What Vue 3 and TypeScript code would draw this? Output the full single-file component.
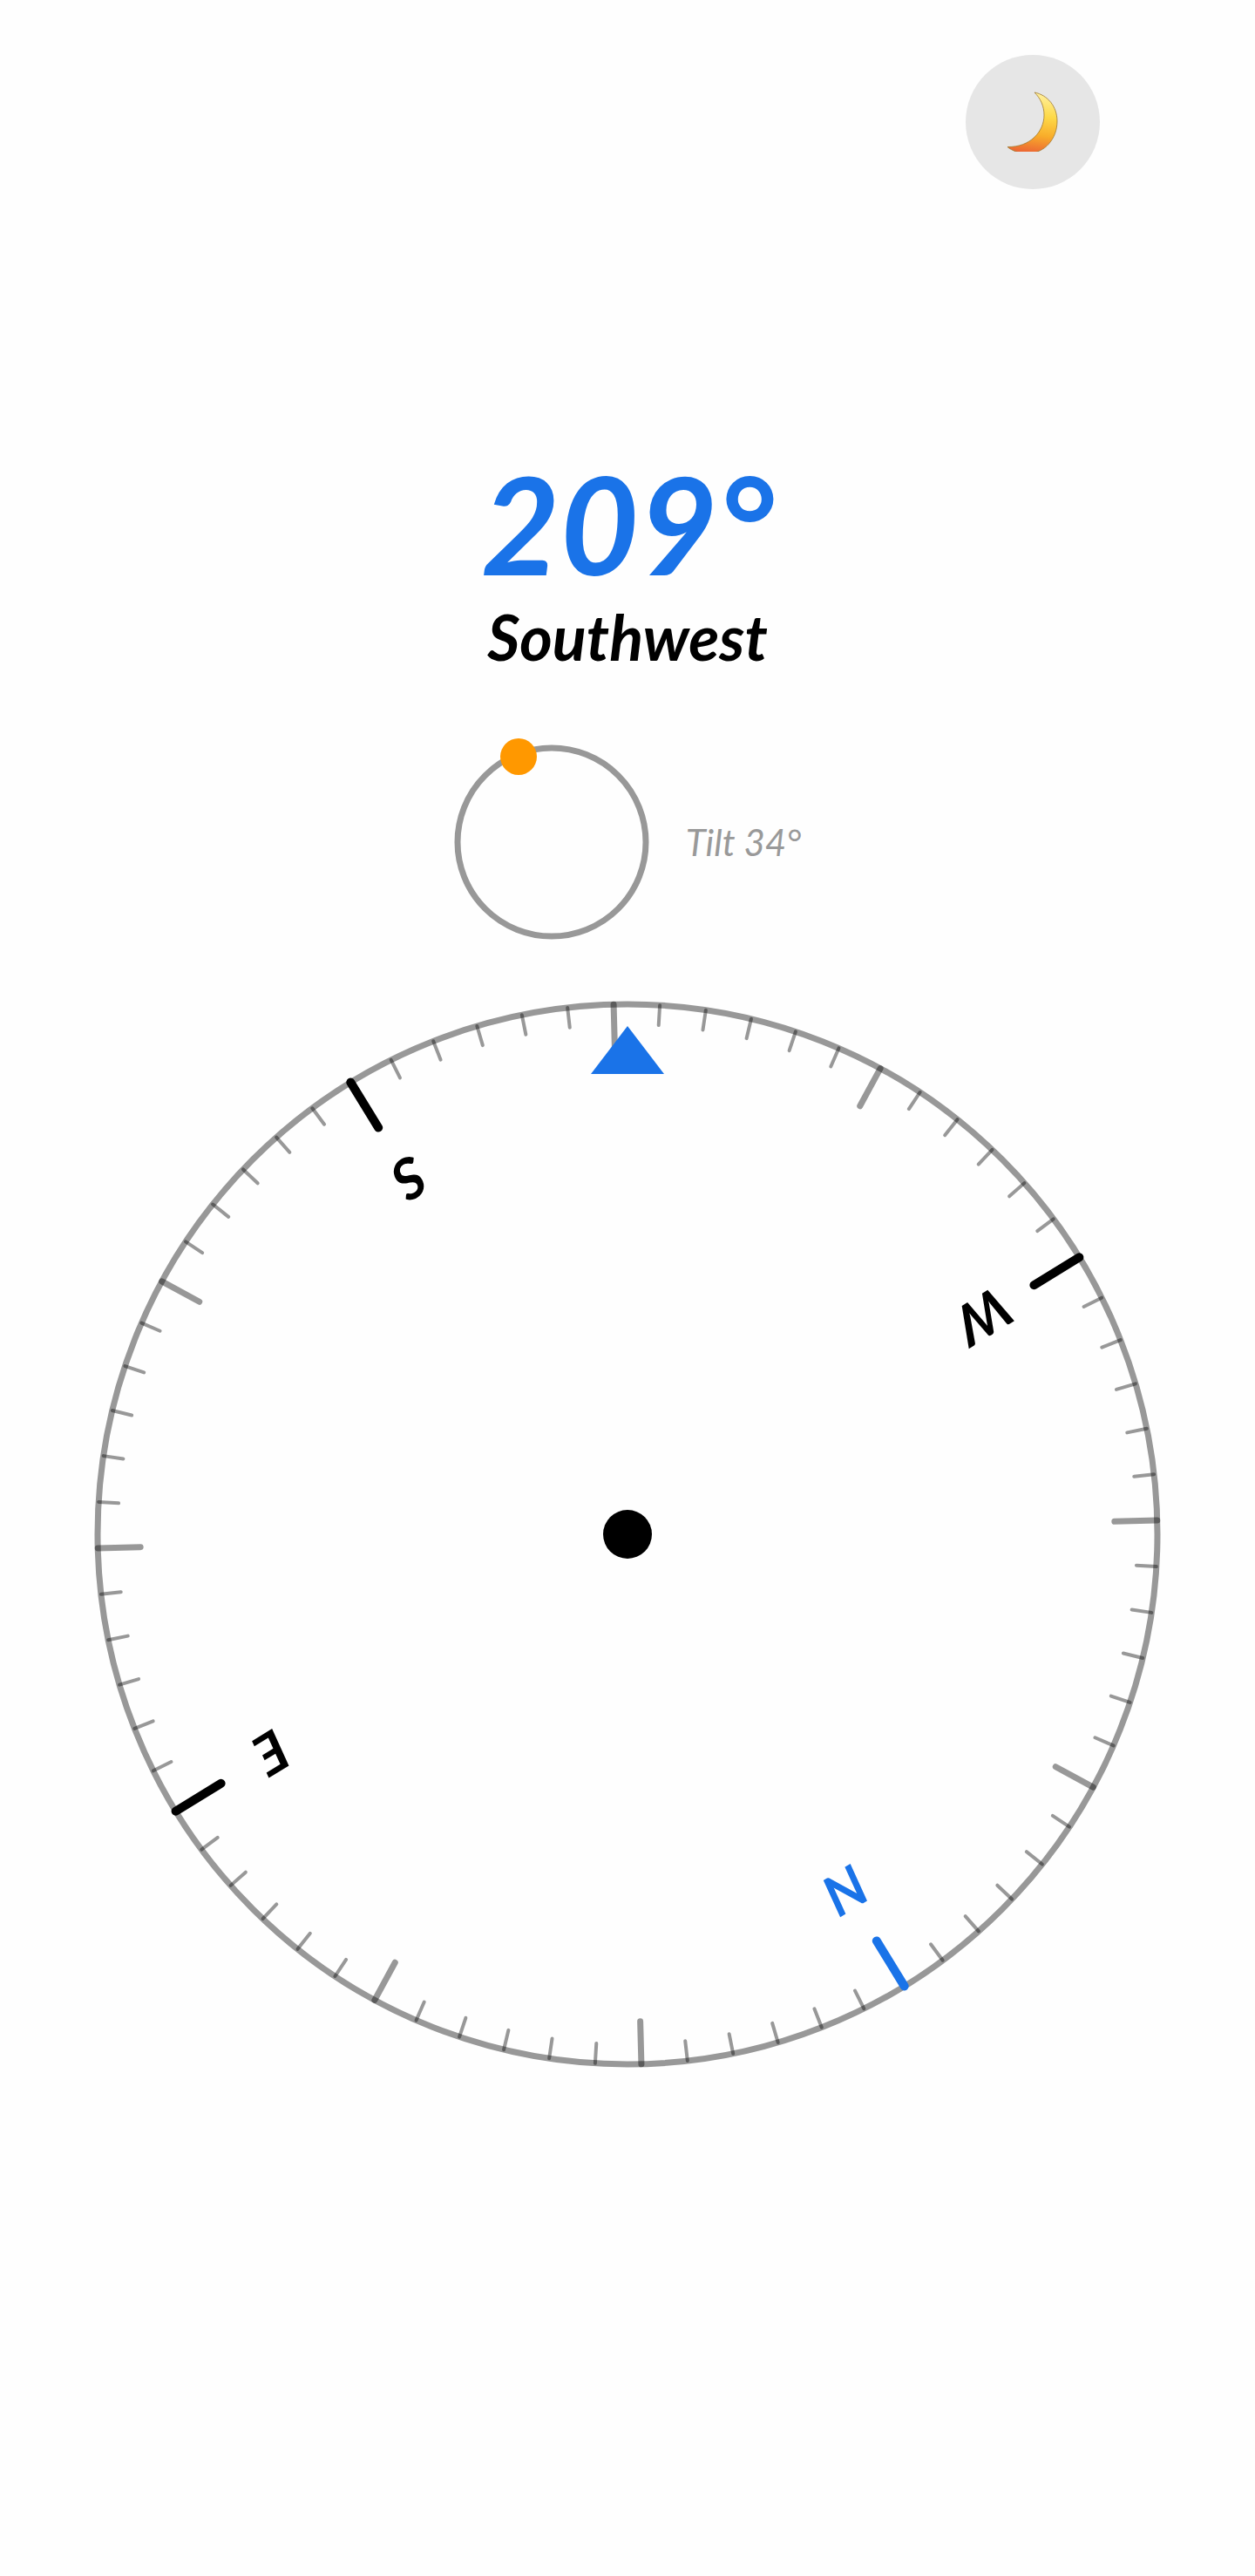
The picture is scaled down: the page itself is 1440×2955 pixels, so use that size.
<script setup lang="ts">
import { computed, ref } from 'vue'

interface Tick {
  angle: number
  kind: 'minor' | 'major' | 'cardinal' | 'north'
  inner: number
}

interface Cardinal {
  label: string
  angle: number
}

const heading = ref(209)
const direction = ref('Southwest')
const tilt = ref(34)
const dialRotation = ref(148.5)

const RADIUS = 608
const LETTER_RADIUS = 479

const cardinals: Cardinal[] = [
  { label: 'N', angle: 0 },
  { label: 'E', angle: 90 },
  { label: 'S', angle: 180 },
  { label: 'W', angle: 270 },
]

const ticks = computed<Tick[]>(() =>
  Array.from({ length: 72 }, (_, i) => {
    const angle = i * 5
    if (angle === 0) return { angle, kind: 'north', inner: 547 }
    if (angle % 90 === 0) return { angle, kind: 'cardinal', inner: 547 }
    if (angle % 30 === 0) return { angle, kind: 'major', inner: 559 }
    return { angle, kind: 'minor', inner: 585 }
  }),
)

// Letters keep the dial's own orientation wherever they sit on it.
function letterTransform(angle: number): string {
  return `rotate(${angle}) translate(0 ${-LETTER_RADIUS}) rotate(${-angle})`
}
</script>

<template>
  <main class="compass">
    <header class="toolbar">
      <button class="theme" type="button" aria-label="Switch to dark theme">
        <svg class="moon" viewBox="0 0 60 70" aria-hidden="true">
          <defs>
            <linearGradient id="moon-fill" x1="0.6" y1="0" x2="0.5" y2="1">
              <stop offset="0" stop-color="#fff0a0" />
              <stop offset="0.38" stop-color="#fdd948" />
              <stop offset="0.7" stop-color="#f8ac2a" />
              <stop offset="1" stop-color="#ec6434" />
            </linearGradient>
            <clipPath id="moon-clip"><rect width="60" height="69" /></clipPath>
          </defs>
          <path
            clip-path="url(#moon-clip)"
            d="M32 1C47 4 58 17 58 34C58 54 44 71 24 71C15 71 6 68 1 63.500C27 64 43 46 43 27C43 17 39 8 32 1Z"
            fill="url(#moon-fill)"
            stroke="#a07a30"
            stroke-opacity="0.8"
            stroke-linejoin="round"
          />
        </svg>
      </button>
    </header>

    <section class="reading">
      <h1 class="degrees">{{ heading }}°</h1>
      <p class="direction">{{ direction }}</p>
    </section>

    <section class="tilt">
      <svg class="level" viewBox="-112 -112 224 224" aria-hidden="true">
        <circle class="level-ring" r="108" />
        <circle class="level-dot" cx="-38" cy="-98" r="21" />
      </svg>
      <span class="tilt-label">Tilt {{ tilt }}°</span>
    </section>

    <svg class="dial" viewBox="-612 -612 1224 1224" role="img" aria-label="Compass dial">
      <circle class="ring" :r="RADIUS" />
      <g :transform="`rotate(${dialRotation})`">
        <line
          v-for="tick in ticks"
          :key="tick.angle"
          :class="['tick', tick.kind]"
          :y1="-RADIUS"
          :y2="-tick.inner"
          :transform="`rotate(${tick.angle})`"
        />
        <text
          v-for="point in cardinals"
          :key="point.label"
          :class="['letter', { 'letter-north': point.angle === 0 }]"
          y="23"
          :transform="letterTransform(point.angle)"
        >{{ point.label }}</text>
      </g>
      <path class="pointer" d="M0 -583L42 -528H-42Z" />
      <circle class="hub" r="28" />
    </svg>
  </main>
</template>

<style>
body {
  margin: 0;
  background: #fefefe;
}
</style>

<style scoped>
.compass {
  box-sizing: border-box;
  display: flex;
  flex-direction: column;
  align-items: center;
  min-height: 100vh;
  color: #000;
  font-family: Lato, "Open Sans", sans-serif;
  font-style: italic;
}

.toolbar {
  box-sizing: border-box;
  display: flex;
  justify-content: flex-end;
  width: 100%;
  padding: 63px 178px 0;
}

.theme {
  display: flex;
  align-items: center;
  justify-content: center;
  width: 154px;
  height: 154px;
  padding: 0;
  border: 0;
  border-radius: 50%;
  background: #e6e6e6;
  cursor: pointer;
}

.moon {
  width: 60px;
  height: 70px;
}

.reading {
  margin-top: 303px;
  text-align: center;
}

.degrees {
  margin: 0;
  color: #1a73e8;
  font-size: 156px;
  font-weight: 700;
  line-height: 160px;
}

.direction {
  margin: 0;
  font-size: 72px;
  font-weight: 700;
  line-height: 100px;
}

.tilt {
  display: flex;
  align-items: center;
  gap: 42px;
  margin-top: 74px;
}

.level {
  width: 224px;
  height: 224px;
  overflow: visible;
}

.level-ring,
.ring {
  fill: none;
  stroke: rgba(0, 0, 0, 0.4);
  stroke-width: 7px;
}

.level-dot {
  fill: #ff9800;
}

.tilt-label {
  color: #999;
  font-size: 42px;
  line-height: 48px;
}

.dial {
  display: block;
  width: 85%;
  margin-top: 70px;
}

.tick {
  stroke: rgba(0, 0, 0, 0.4);
  stroke-linecap: round;
}

.minor {
  stroke-width: 4px;
}

.major {
  stroke-width: 7px;
}

.cardinal {
  stroke: #000;
  stroke-width: 10px;
}

.north {
  stroke: #1a73e8;
  stroke-width: 10px;
}

.letter {
  font-size: 64px;
  font-weight: 700;
  text-anchor: middle;
}

.letter-north,
.pointer {
  fill: #1a73e8;
}
</style>
